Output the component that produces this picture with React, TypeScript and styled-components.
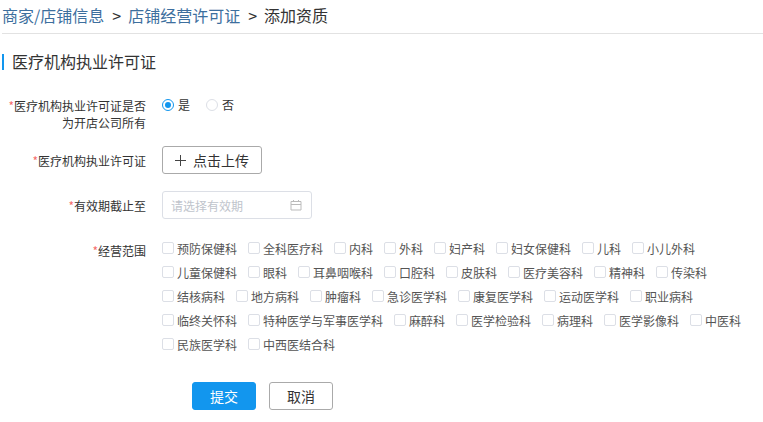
import React, { FC } from 'react';
import styled, { createGlobalStyle } from 'styled-components';

const GlobalStyle = createGlobalStyle`
  html, body {
    margin: 0;
    padding: 0;
    background: #fff;
  }
  body {
    font-family: "Noto Sans CJK SC", "Liberation Sans", sans-serif;
    color: #333;
    overflow: hidden;
  }
`;

const scopes = [
  '预防保健科', '全科医疗科', '内科', '外科', '妇产科', '妇女保健科', '儿科', '小儿外科',
  '儿童保健科', '眼科', '耳鼻咽喉科', '口腔科', '皮肤科', '医疗美容科', '精神科', '传染科',
  '结核病科', '地方病科', '肿瘤科', '急诊医学科', '康复医学科', '运动医学科', '职业病科',
  '临终关怀科', '特种医学与军事医学科', '麻醉科', '医学检验科', '病理科', '医学影像科', '中医科',
  '民族医学科', '中西医结合科',
];

const Page = styled.div`
  width: 763px;
  height: 422px;
  padding-left: 2px;
  box-sizing: border-box;
`;

const Breadcrumb = styled.div`
  height: 33px;
  box-sizing: content-box;
  border-bottom: 1px solid #e2e2e2;
  display: flex;
  align-items: flex-start;
  font-size: 16px;
  line-height: 30px;
  color: #333;
`;

const Crumb = styled.span`
  color: #3d6f9e;
`;

const Sep = styled.span`
  margin: 0 7px 0 8px;
`;

const SectionTitle = styled.h2`
  margin: 20px 0 0;
  height: 16px;
  border-left: 2px solid #1296ee;
  padding-left: 8px;
  font-size: 16px;
  font-weight: 400;
  line-height: 14px;
  color: #333;
`;

const Form = styled.div`
  display: flex;
  flex-direction: column;
  margin-top: 21px;
`;

const Row = styled.div<{ $height: number }>`
  display: grid;
  grid-template-columns: 144px 1fr;
  column-gap: 16px;
  min-height: ${(p) => p.$height}px;
`;

const Label = styled.label`
  text-align: right;
  font-size: 12px;
  line-height: 17px;
  color: #333;
  padding-top: 6px;
`;

const Star = styled.span`
  color: #f56c6c;
`;

const Field = styled.div`
  display: flex;
  align-items: flex-start;
`;

const RadioGroup = styled.div`
  display: flex;
  gap: 16px;
  padding-top: 8px;
`;

const RadioItem = styled.span`
  display: flex;
  align-items: center;
  gap: 4px;
  font-size: 12px;
  line-height: 12px;
`;

const RadioDot = styled.i<{ $on?: boolean }>`
  width: 12px;
  height: 12px;
  box-sizing: border-box;
  border-radius: 50%;
  border: 1px solid ${(p) => (p.$on ? '#1296ee' : '#dcdfe6')};
  display: flex;
  align-items: center;
  justify-content: center;
  &::after {
    content: '';
    width: 6px;
    height: 6px;
    border-radius: 50%;
    background: ${(p) => (p.$on ? '#1296ee' : 'transparent')};
  }
`;

const UploadButton = styled.button`
  width: 100px;
  height: 28px;
  box-sizing: border-box;
  border: 1px solid #aaa;
  border-radius: 3px;
  background: #fff;
  color: #333;
  font: inherit;
  font-size: 14px;
  display: flex;
  align-items: center;
  justify-content: center;
  gap: 7px;
  padding: 0;
`;

const DateInput = styled.div`
  width: 150px;
  height: 28px;
  box-sizing: border-box;
  border: 1px solid #dcdfe6;
  border-radius: 3px;
  display: flex;
  align-items: center;
  justify-content: space-between;
  padding: 0 9px 0 8px;
  font-size: 12px;
  color: #c0c4cc;
`;

const ScopeList = styled.div`
  display: flex;
  flex-wrap: wrap;
`;

const ScopeItem = styled.span`
  display: flex;
  align-items: center;
  height: 24px;
  margin-right: 11px;
  font-size: 12px;
  color: #555;
`;

const Box = styled.i`
  width: 12px;
  height: 12px;
  box-sizing: border-box;
  border: 1px solid #dcdfe6;
  border-radius: 2px;
  margin-right: 3px;
`;

const Actions = styled.div`
  display: flex;
  gap: 13px;
  margin: 26px 0 0 190px;
`;

const ActionButton = styled.button<{ $primary?: boolean }>`
  width: 64px;
  height: 28px;
  box-sizing: border-box;
  border: 1px solid ${(p) => (p.$primary ? '#1296ee' : '#aaa')};
  border-radius: 3px;
  background: ${(p) => (p.$primary ? '#1296ee' : '#fff')};
  color: ${(p) => (p.$primary ? '#fff' : '#333')};
  font: inherit;
  font-size: 14px;
  padding: 0;
`;

const Required: FC<{ children: React.ReactNode }> = ({ children }) => (
  <Label>
    <Star>*</Star>
    {children}
  </Label>
);

export default function App() {
  return (
    <Page>
      <GlobalStyle />
      <Breadcrumb>
        <Crumb>商家/店铺信息</Crumb>
        <Sep>&gt;</Sep>
        <Crumb>店铺经营许可证</Crumb>
        <Sep>&gt;</Sep>
        添加资质
      </Breadcrumb>
      <SectionTitle>医疗机构执业许可证</SectionTitle>
      <Form>
        <Row $height={55}>
          <Required>
            医疗机构执业许可证是否
            <br />
            为开店公司所有
          </Required>
          <Field>
            <RadioGroup>
              <RadioItem>
                <RadioDot $on />是
              </RadioItem>
              <RadioItem>
                <RadioDot />否
              </RadioItem>
            </RadioGroup>
          </Field>
        </Row>
        <Row $height={45}>
          <Required>医疗机构执业许可证</Required>
          <Field>
            <UploadButton>
              <svg width="11" height="11" viewBox="0 0 11 11" fill="none" stroke="#444" strokeWidth="1">
                <path d="M5.5 0v11M0 5.5h11" />
              </svg>
              点击上传
            </UploadButton>
          </Field>
        </Row>
        <Row $height={45}>
          <Required>有效期截止至</Required>
          <Field>
            <DateInput>
              请选择有效期
              <svg width="12" height="12" viewBox="0 0 12 12" fill="none" stroke="#bbb" strokeWidth="1">
                <path d="M1 2.5h10v8.5H1zM1 5.5h10M3.5 1v2M8.5 1v2" />
              </svg>
            </DateInput>
          </Field>
        </Row>
        <Row $height={120}>
          <Required>经营范围</Required>
          <ScopeList>
            {scopes.map((s) => (
              <ScopeItem key={s}>
                <Box />
                {s}
              </ScopeItem>
            ))}
          </ScopeList>
        </Row>
      </Form>
      <Actions>
        <ActionButton $primary>提交</ActionButton>
        <ActionButton>取消</ActionButton>
      </Actions>
    </Page>
  );
}
